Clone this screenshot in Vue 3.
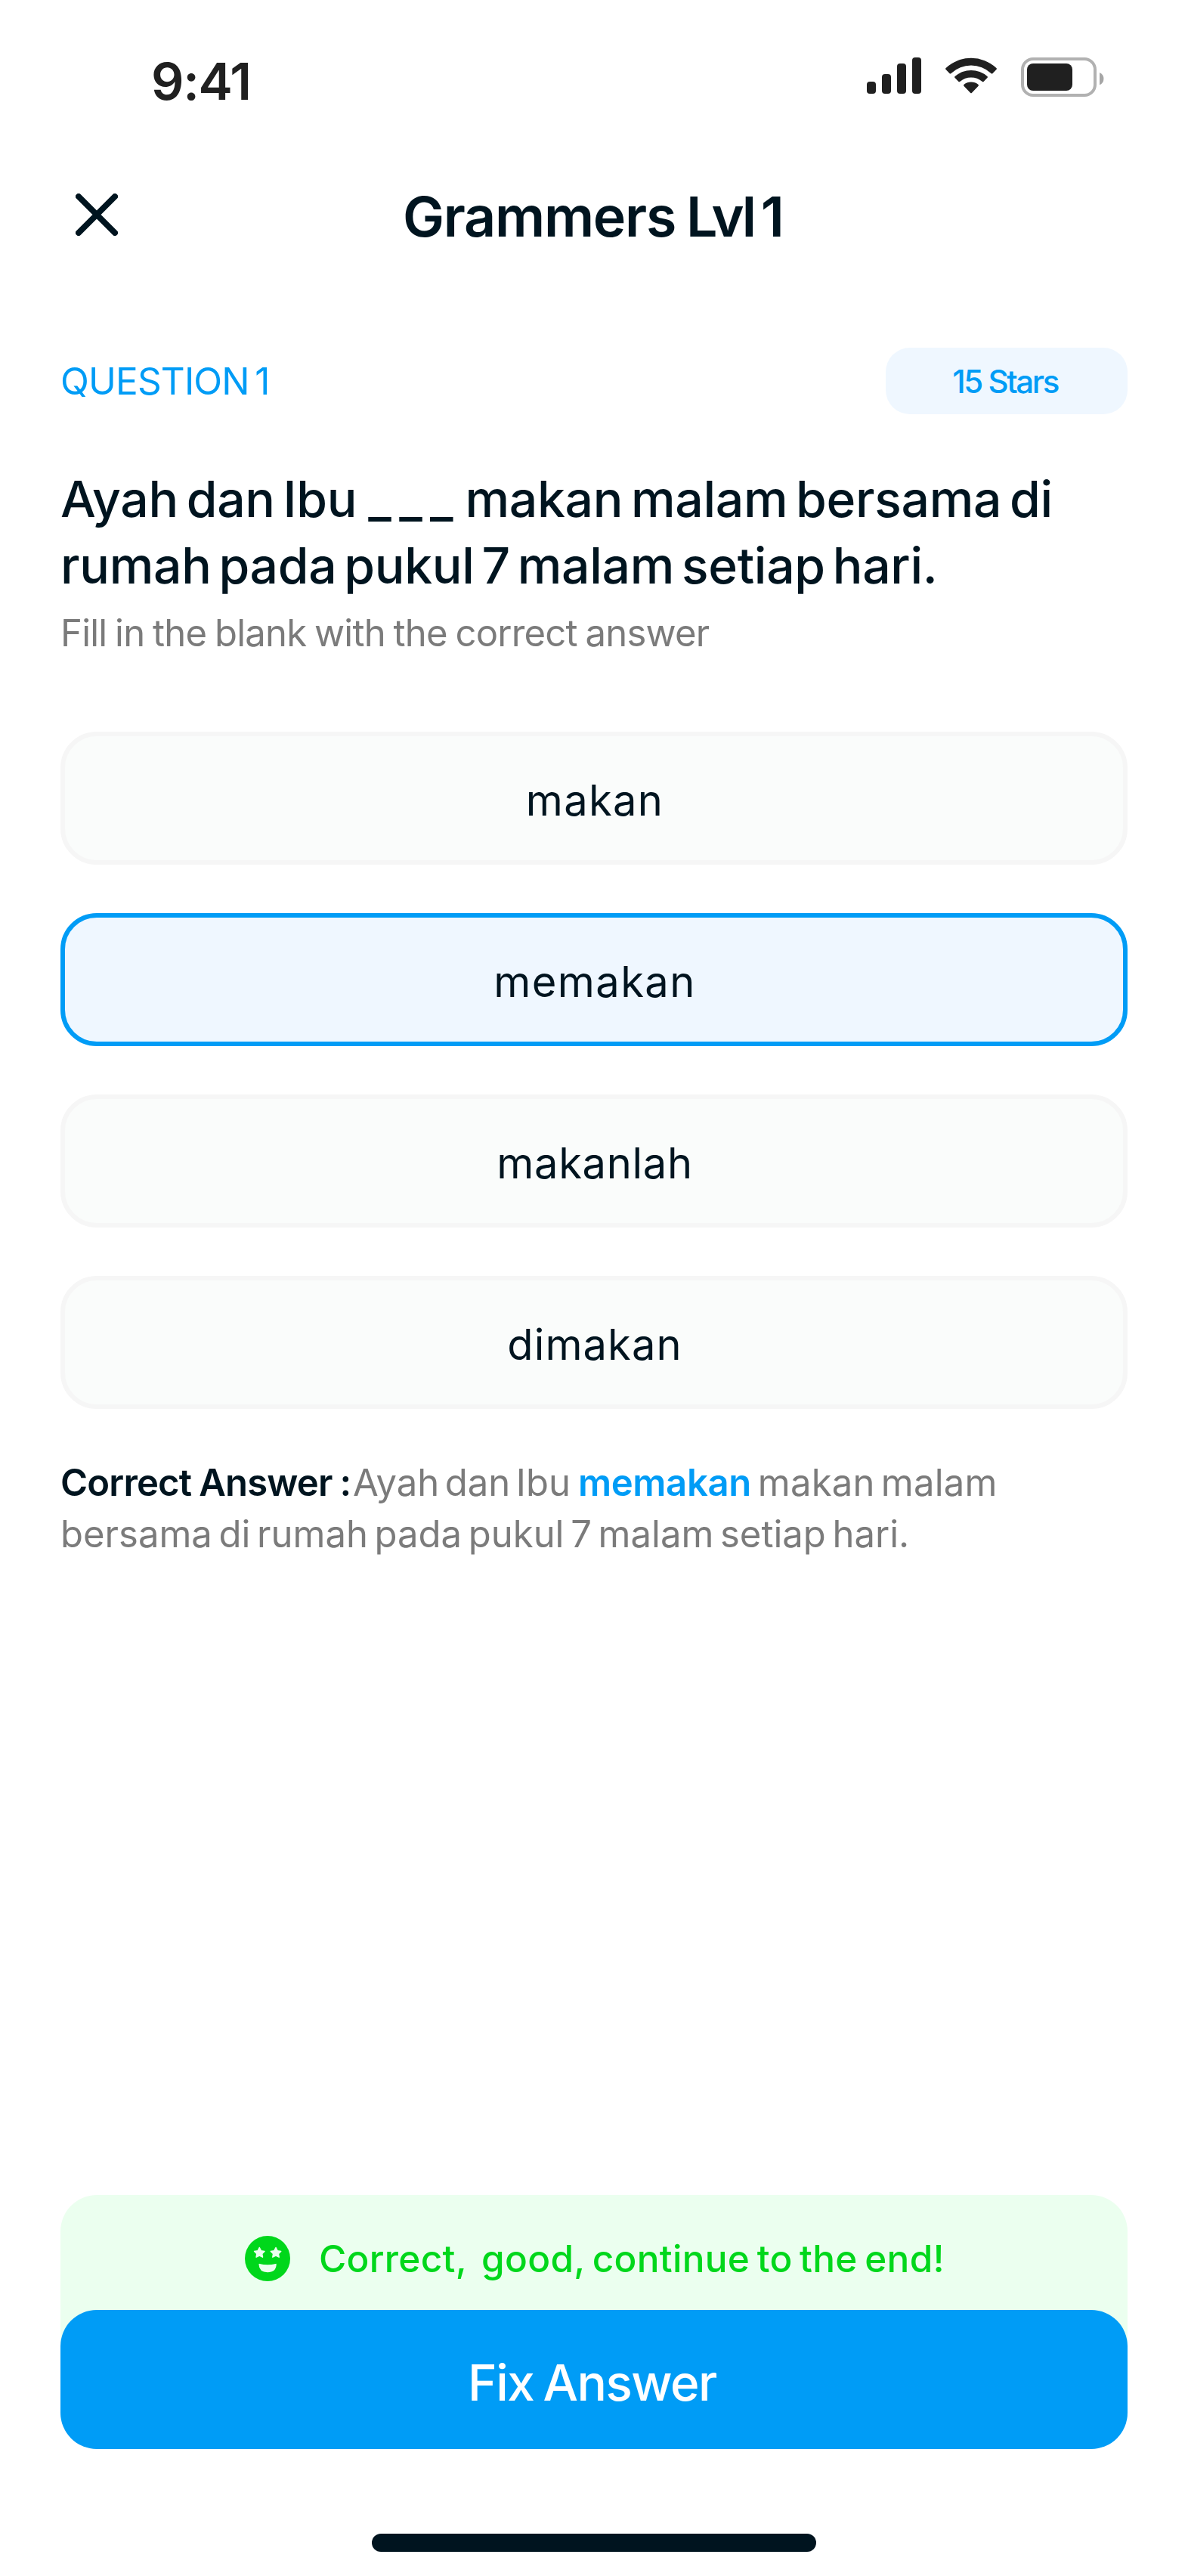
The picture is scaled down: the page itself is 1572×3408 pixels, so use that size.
<script setup>
import { ref } from 'vue'

const options = [
  { text: 'makan', tracking: 1.3 },
  { text: 'memakan', tracking: 1.4 },
  { text: 'makanlah', tracking: 0.7 },
  { text: 'dimakan', tracking: 1.1 },
]
const selected = ref('memakan')
</script>

<template>
  <div class="screen">
    <div class="status">
      <span class="time">9:41</span>
      <svg class="signal" width="72" height="48" viewBox="0 0 72 48" fill="#202020">
        <rect x="0" y="32" width="12" height="16" rx="4" />
        <rect x="20" y="22" width="12" height="26" rx="4" />
        <rect x="40" y="8" width="12" height="40" rx="4" />
        <rect x="60" y="0" width="12" height="48" rx="4" />
      </svg>
      <svg class="wifi" width="68" height="48" viewBox="0 0 68 48" fill="#202020">
        <path d="M0.6 13.9Q-0.4 15 0.6 16L5.4 20.9Q6.5 22 7.6 20.9A39 39 0 0 1 60.4 20.9Q61.5 22 62.6 20.9L67.4 16Q68.4 15 67.4 13.9A49 49 0 0 0 0.6 13.9Z" />
        <path d="M12.6 25Q11.6 26 12.6 27.1L17.2 31.8Q18.3 32.9 19.5 31.8A22.5 22.5 0 0 1 48.5 31.8Q49.7 32.9 50.8 31.8L55.4 27.1Q56.4 26 55.4 25A32.5 32.5 0 0 0 12.6 25Z" />
        <path d="M24.6 35.8Q23.4 37 24.6 38.1L33 46.7Q34 47.7 35 46.7L43.4 38.1Q44.6 37 43.4 35.8A15 15 0 0 0 24.6 35.8Z" />
      </svg>
      <svg class="battery" width="110" height="52" viewBox="0 0 110 52">
        <rect x="2" y="2" width="96" height="48" rx="14" fill="none" stroke="#b1b1b1" stroke-width="4" />
        <rect x="8" y="8" width="60" height="36" rx="8" fill="#202020" />
        <path d="M104 20a9 9 0 0 1 0 16.5z" fill="#a6a6a6" />
      </svg>
    </div>

    <header class="header">
      <svg class="close" width="56" height="56" viewBox="0 0 56 56" fill="none" stroke="#00141f" stroke-width="8" stroke-linecap="round">
        <path d="M4 4L52 52M52 4L4 52" />
      </svg>
      <h1 class="title">Grammers <span class="level">Lvl</span> 1</h1>
    </header>

    <main class="content">
      <div class="meta">
        <span class="number">QUESTION 1</span>
        <span class="stars">15 Stars</span>
      </div>

      <h2 class="question">
        <span class="q1">Ayah dan Ibu <span class="blank">___</span> makan malam bersama di</span><br>
        <span class="q2">rumah pada pukul 7 malam setiap hari.</span>
      </h2>
      <p class="hint">Fill in the blank with the correct answer</p>

      <div class="options">
        <button
          v-for="o in options"
          :key="o.text"
          class="option"
          :class="{ selected: o.text === selected }"
          @click="selected = o.text"
        ><span :style="{ letterSpacing: o.tracking + 'px' }">{{ o.text }}</span></button>
      </div>

      <p class="answer">
        <b class="label">Correct Answer :</b><span class="a1">Ayah dan Ibu</span><b class="key">memakan</b><span class="a3">makan malam</span><br>
        <span class="a4">bersama di rumah pada pukul 7 malam setiap hari.</span>
      </p>
    </main>

    <footer class="footer">
      <div class="feedback">
        <svg width="60" height="60" viewBox="0 0 60 60">
          <circle cx="30" cy="30" r="30" fill="#00d71b" />
          <g fill="#ebffef" stroke="#ebffef" stroke-width="1.5" stroke-linejoin="round">
            <path d="M19.3 15.5L21.4 19.7L26 20.4L22.7 23.7L23.5 28.2L19.3 26.1L15.1 28.2L15.9 23.7L12.6 20.4L17.2 19.7Z" />
            <path d="M41 15.5L43.1 19.7L47.7 20.4L44.4 23.7L45.2 28.2L41 26.1L36.8 28.2L37.6 23.7L34.3 20.4L38.9 19.7Z" />
            <path d="M19.2 37.6Q30 40.6 41 37.6Q40.5 47.4 30 47.4Q19.7 47.4 19.2 37.6Z" />
          </g>
        </svg>
        <span class="message">Correct,&nbsp; good, continue to the end!</span>
      </div>
      <button class="action">Fix Answer</button>
      <div class="home"></div>
    </footer>
  </div>
</template>

<style>
body {
  background: #fff;
}
</style>

<style scoped>
.screen {
  display: flex;
  flex-direction: column;
  box-sizing: border-box;
  width: 1572px;
  height: 3408px;
  overflow: hidden;
  background: #fff;
  color: #00141f;
  font-family: Inter, "Liberation Sans", sans-serif;
}
h1, h2, p {
  margin: 0;
}
button {
  display: flex;
  align-items: center;
  justify-content: center;
  box-sizing: border-box;
  width: 100%;
  color: inherit;
  font-family: inherit;
}
.status {
  display: flex;
  align-items: flex-start;
  box-sizing: border-box;
  height: 200px;
  padding: 76px 0 0 200px;
}
.time {
  margin-right: auto;
  color: #202020;
  font-size: 68px;
  font-weight: 600;
  line-height: 62px;
  letter-spacing: -1.34px;
}
.signal {
  margin-right: 32px;
}
.wifi {
  margin-right: 32px;
}
.battery {
  margin-right: 111px;
}
.header {
  display: flex;
  align-items: center;
  height: 168px;
  padding-left: 100px;
}
.title {
  margin-left: 377px;
  padding-top: 6px;
  font-size: 73.5px;
  font-weight: 600;
  line-height: 96px;
  letter-spacing: -1.25px;
  word-spacing: -5.5px;
  white-space: nowrap;
}
.level {
  margin: 0 -3px 0 2px;
  letter-spacing: -3px;
}
.content {
  padding: 92px 80px 0;
}
.meta {
  display: flex;
  align-items: center;
  justify-content: space-between;
  height: 88px;
  color: #009cf6;
}
.number {
  font-size: 49.5px;
  font-weight: 400;
  letter-spacing: -0.85px;
  word-spacing: -5.5px;
}
.stars {
  display: flex;
  align-items: center;
  justify-content: center;
  box-sizing: border-box;
  width: 320px;
  height: 88px;
  padding-right: 4px;
  border-radius: 32px;
  background: #eff7ff;
  font-size: 42px;
  font-weight: 500;
  letter-spacing: -2.4px;
}
.question {
  margin-top: 68px;
  font-size: 66px;
  font-weight: 500;
  line-height: 88px;
  white-space: nowrap;
}
.q1 {
  letter-spacing: -0.3px;
  word-spacing: -6.5px;
}
.q2 {
  letter-spacing: -0.3px;
  word-spacing: -7.4px;
}
.blank {
  margin: 0 -5.4px 0 4.3px;
  letter-spacing: 10.4px;
}
.hint {
  margin-top: 16px;
  color: #7b7b7b;
  font-size: 49px;
  font-weight: 380;
  line-height: 60px;
  letter-spacing: -0.8px;
  word-spacing: -2.2px;
}
.options {
  display: flex;
  flex-direction: column;
  gap: 64px;
  margin-top: 100px;
}
.option {
  height: 176px;
  padding: 6px 0 0 2px;
  border: 6px solid #f6f6f6;
  border-radius: 48px;
  background: #fafcfb;
  font-size: 56px;
  font-weight: 430;
}
.option.selected {
  border-color: #009cf6;
  background: #eff7ff;
}
.answer {
  margin-top: 64px;
  color: #7b7b7b;
  font-size: 49px;
  font-weight: 370;
  line-height: 68px;
  white-space: nowrap;
}
.answer b {
  font-weight: 600;
}
.label {
  color: #00141f;
  letter-spacing: -0.83px;
  word-spacing: -1.55px;
}
.a1 {
  margin-left: 2.6px;
  word-spacing: -6.23px;
}
.key {
  margin: 0 9px 0 10px;
  color: #009cf6;
  letter-spacing: -0.35px;
}
.a3 {
  letter-spacing: 0.2px;
  word-spacing: -5.8px;
}
.a4 {
  letter-spacing: 0;
  word-spacing: -5.1px;
}
.footer {
  margin-top: auto;
  padding: 0 80px 32px;
}
.feedback {
  display: flex;
  align-items: flex-start;
  box-sizing: border-box;
  height: 200px;
  margin-bottom: -48px;
  padding: 54px 0 0 244px;
  border-radius: 48px 48px 0 0;
  background: #ebffef;
  color: #00d71b;
}
.message {
  margin-left: 38px;
  font-size: 49.5px;
  font-weight: 500;
  line-height: 60px;
  letter-spacing: 0.3px;
  word-spacing: -4px;
  white-space: nowrap;
}
.action {
  position: relative;
  height: 184px;
  padding: 8px 5px 0 0;
  border: 0;
  border-radius: 48px;
  background: #009cf6;
  color: #fff;
  font-size: 65.6px;
  font-weight: 500;
  letter-spacing: -1.52px;
  word-spacing: -3.7px;
}
.home {
  width: 588px;
  height: 24px;
  margin: 112px auto 0;
  border-radius: 12px;
  background: #00141f;
}
</style>
